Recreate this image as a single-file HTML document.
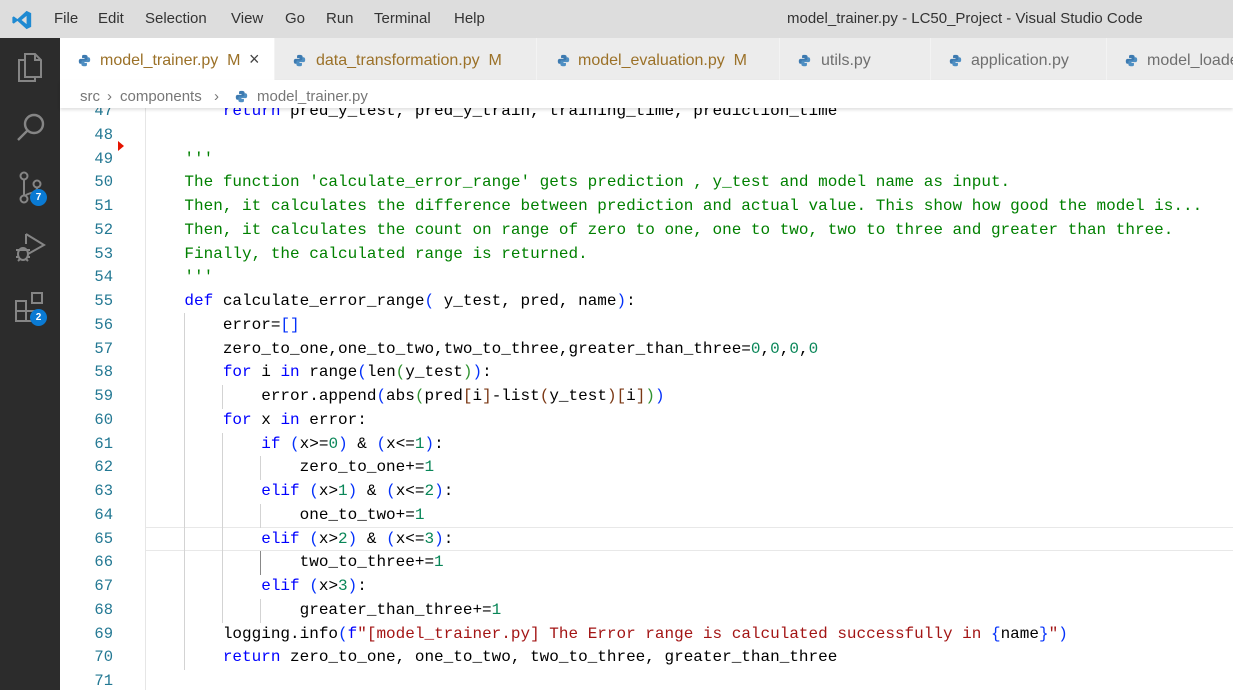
<!DOCTYPE html>
<html><head><meta charset="utf-8"><style>
*{margin:0;padding:0;box-sizing:border-box}
body{width:1233px;height:690px;overflow:hidden;background:#fff;font-family:"Liberation Sans",sans-serif;position:relative}
#title{position:absolute;left:0;top:0;width:1233px;height:38px;background:#dddddd;color:#333;font-size:15px}
#title span{position:absolute;top:10px}
#act{position:absolute;left:0;top:38px;width:60px;height:652px;background:#2c2c2c}
.badge{position:absolute;width:17px;height:17px;border-radius:50%;background:#0a7ad3;color:#fff;font-size:10px;font-weight:bold;text-align:center;line-height:17px}
#tabs{position:absolute;left:60px;top:38px;width:1173px;height:42px;background:#ececec}
.tab{position:absolute;top:0;height:42px;border-right:1px solid #f3f3f3;font-size:16px;color:#6f6f6f}
.tab .t{position:absolute;top:14px}
.tab.m .t{color:#9b7128}
.py{position:absolute;top:16px;width:13px;height:13px}
#bc{position:absolute;left:60px;top:80px;width:1173px;height:28px;background:#fff;box-shadow:0 2px 3px rgba(0,0,0,.12);z-index:5;font-size:15px;color:#777}
#bc span{position:absolute;top:8px}
#ed{position:absolute;left:60px;top:108px;width:1173px;height:582px;overflow:hidden}
.ln{position:absolute;left:0;width:53px;text-align:right;font-family:"Liberation Mono",monospace;font-size:15.5px;color:#237893;height:23.75px;line-height:23.75px}
.cl{position:absolute;left:86px;font-family:"Liberation Mono",monospace;font-size:16px;color:#000;white-space:pre;height:23.75px;line-height:23.75px}
.k{color:#0000ff}.c{color:#008000}.n{color:#098658}.s{color:#a31515}
.b1{color:#0431fa}.b2{color:#319331}.b3{color:#7b3814}
.g{position:absolute;width:1px;background:#d3d3d3}
</style></head><body>
<div id="title">
<svg style="position:absolute;left:11px;top:9px" width="22" height="22" viewBox="0 0 24 24"><path d="M17 2 L22 4.5 V19.5 L17 22 L7 13 L3 16 L1.5 15 V9 L3 8 L7 11 Z M17 7.5 L11.5 12 L17 16.5 Z" fill="#1f8ad2"/></svg>
<span style="left:54px">File</span><span style="left:98px">Edit</span><span style="left:145px">Selection</span><span style="left:231px">View</span><span style="left:285px">Go</span><span style="left:326px">Run</span><span style="left:374px">Terminal</span><span style="left:454px">Help</span>
<span style="left:787px">model_trainer.py - LC50_Project - Visual Studio Code</span>
</div>
<div id="act">
<svg style="position:absolute;left:16px;top:14px" width="28" height="34" viewBox="0 0 28 34" fill="none" stroke="#858585" stroke-width="2"><path d="M9 8 H3 V29 H19 V25"/><path d="M9 2 H19 L25 8 V25 H9 Z"/><path d="M19 2 V8 H25"/></svg>
<svg style="position:absolute;left:16px;top:74px" width="30" height="32" viewBox="0 0 30 32" fill="none" stroke="#858585" stroke-width="2.4"><circle cx="18" cy="12" r="9"/><path d="M11.5 18.5 L2 28"/></svg>
<svg style="position:absolute;left:16px;top:132px" width="28" height="36" viewBox="0 0 28 36" fill="none" stroke="#858585" stroke-width="2"><circle cx="8" cy="6" r="3.5"/><circle cx="8" cy="29" r="3.5"/><circle cx="21" cy="14" r="3.5"/><path d="M8 10 V25 M21 18 C21 24 12 22 9 26"/></svg>
<div class="badge" style="left:30px;top:151px">7</div>
<svg style="position:absolute;left:14px;top:192px" width="32" height="36" viewBox="0 0 32 36" fill="none" stroke="#858585" stroke-width="2"><path d="M12 4 L30 15 L14 24"/><path d="M12 4 V14"/><ellipse cx="9" cy="24" rx="5" ry="6"/><path d="M2 20 H16 M2 27 H5 M13 27 H16 M4 31 L6 29 M14 31 L12 29"/></svg>
<svg style="position:absolute;left:14px;top:253px" width="32" height="32" viewBox="0 0 32 32" fill="none" stroke="#858585" stroke-width="2"><path d="M2 10 H12 V30 H2 Z M2 20 H22 V30 H12"/><rect x="18" y="2" width="10" height="10"/></svg>
<div class="badge" style="left:30px;top:271px">2</div>
</div>
<div id="tabs">
<div class="tab m" style="left:0;width:215px;background:#fff"><svg class="py" style="left:18px" viewBox="0 0 16 16"><path d="M8 1C5 1 5 2 5 3v2h3v1H3C1.5 6 1 7.5 1 9s.6 3 2 3h1.5v-2c0-1.2 1-2 2-2h3.5c1 0 1.8-.8 1.8-1.8V3c0-1-1-2-3.8-2z" fill="#3d7ab0"/><path d="M8 15c3 0 3-1 3-2v-2H8v-1h5c1.5 0 2-1.5 2-3s-.6-3-2-3h-1.5v2c0 1.2-1 2-2 2H6c-1 0-1.8.8-1.8 1.8V13c0 1 1 2 3.8 2z" fill="#4f8fc3"/></svg><span class="t" style="left:40px">model_trainer.py&nbsp; M</span><span class="t" style="left:189px;color:#444;font-size:18px;top:11px">×</span></div>
<div class="tab m" style="left:215px;width:262px"><svg class="py" style="left:18px" viewBox="0 0 16 16"><path d="M8 1C5 1 5 2 5 3v2h3v1H3C1.5 6 1 7.5 1 9s.6 3 2 3h1.5v-2c0-1.2 1-2 2-2h3.5c1 0 1.8-.8 1.8-1.8V3c0-1-1-2-3.8-2z" fill="#3d7ab0"/><path d="M8 15c3 0 3-1 3-2v-2H8v-1h5c1.5 0 2-1.5 2-3s-.6-3-2-3h-1.5v2c0 1.2-1 2-2 2H6c-1 0-1.8.8-1.8 1.8V13c0 1 1 2 3.8 2z" fill="#4f8fc3"/></svg><span class="t" style="left:41px">data_transformation.py&nbsp; M</span></div>
<div class="tab m" style="left:477px;width:243px"><svg class="py" style="left:20px" viewBox="0 0 16 16"><path d="M8 1C5 1 5 2 5 3v2h3v1H3C1.5 6 1 7.5 1 9s.6 3 2 3h1.5v-2c0-1.2 1-2 2-2h3.5c1 0 1.8-.8 1.8-1.8V3c0-1-1-2-3.8-2z" fill="#3d7ab0"/><path d="M8 15c3 0 3-1 3-2v-2H8v-1h5c1.5 0 2-1.5 2-3s-.6-3-2-3h-1.5v2c0 1.2-1 2-2 2H6c-1 0-1.8.8-1.8 1.8V13c0 1 1 2 3.8 2z" fill="#4f8fc3"/></svg><span class="t" style="left:41px">model_evaluation.py&nbsp; M</span></div>
<div class="tab" style="left:720px;width:151px"><svg class="py" style="left:18px" viewBox="0 0 16 16"><path d="M8 1C5 1 5 2 5 3v2h3v1H3C1.5 6 1 7.5 1 9s.6 3 2 3h1.5v-2c0-1.2 1-2 2-2h3.5c1 0 1.8-.8 1.8-1.8V3c0-1-1-2-3.8-2z" fill="#3d7ab0"/><path d="M8 15c3 0 3-1 3-2v-2H8v-1h5c1.5 0 2-1.5 2-3s-.6-3-2-3h-1.5v2c0 1.2-1 2-2 2H6c-1 0-1.8.8-1.8 1.8V13c0 1 1 2 3.8 2z" fill="#4f8fc3"/></svg><span class="t" style="left:41px">utils.py</span></div>
<div class="tab" style="left:871px;width:176px"><svg class="py" style="left:18px" viewBox="0 0 16 16"><path d="M8 1C5 1 5 2 5 3v2h3v1H3C1.5 6 1 7.5 1 9s.6 3 2 3h1.5v-2c0-1.2 1-2 2-2h3.5c1 0 1.8-.8 1.8-1.8V3c0-1-1-2-3.8-2z" fill="#3d7ab0"/><path d="M8 15c3 0 3-1 3-2v-2H8v-1h5c1.5 0 2-1.5 2-3s-.6-3-2-3h-1.5v2c0 1.2-1 2-2 2H6c-1 0-1.8.8-1.8 1.8V13c0 1 1 2 3.8 2z" fill="#4f8fc3"/></svg><span class="t" style="left:40px">application.py</span></div>
<div class="tab" style="left:1047px;width:200px"><svg class="py" style="left:18px" viewBox="0 0 16 16"><path d="M8 1C5 1 5 2 5 3v2h3v1H3C1.5 6 1 7.5 1 9s.6 3 2 3h1.5v-2c0-1.2 1-2 2-2h3.5c1 0 1.8-.8 1.8-1.8V3c0-1-1-2-3.8-2z" fill="#3d7ab0"/><path d="M8 15c3 0 3-1 3-2v-2H8v-1h5c1.5 0 2-1.5 2-3s-.6-3-2-3h-1.5v2c0 1.2-1 2-2 2H6c-1 0-1.8.8-1.8 1.8V13c0 1 1 2 3.8 2z" fill="#4f8fc3"/></svg><span class="t" style="left:40px">model_loader.py</span></div>
</div>
<div id="bc"><span style="left:20px">src</span><span style="left:47px">›</span><span style="left:60px">components</span><span style="left:154px">›</span><svg style="position:absolute;left:175px;top:10px" width="13" height="13" viewBox="0 0 16 16"><path d="M8 1C5 1 5 2 5 3v2h3v1H3C1.5 6 1 7.5 1 9s.6 3 2 3h1.5v-2c0-1.2 1-2 2-2h3.5c1 0 1.8-.8 1.8-1.8V3c0-1-1-2-3.8-2z" fill="#3d7ab0"/><path d="M8 15c3 0 3-1 3-2v-2H8v-1h5c1.5 0 2-1.5 2-3s-.6-3-2-3h-1.5v2c0 1.2-1 2-2 2H6c-1 0-1.8.8-1.8 1.8V13c0 1 1 2 3.8 2z" fill="#4f8fc3"/></svg><span style="left:197px">model_trainer.py</span></div>
<div id="ed">
<div style="position:absolute;left:85px;top:0;width:1px;height:582px;background:#e6e6e6"></div>
<div style="position:absolute;left:86px;top:419px;width:1087px;height:24px;border-top:1px solid #e8e8e8;border-bottom:1px solid #e8e8e8"></div>
<div style="position:absolute;left:58px;top:33px;width:0;height:0;border-top:5px solid transparent;border-bottom:5px solid transparent;border-left:6px solid #e51400"></div>
<div class="g" style="left:124px;top:205px;height:357px"></div>
<div class="g" style="left:162px;top:277px;height:24px"></div>
<div class="g" style="left:162px;top:325px;height:190px"></div>
<div class="g" style="left:200px;top:348px;height:24px"></div>
<div class="g" style="left:200px;top:396px;height:24px"></div>
<div class="g" style="left:200px;top:443px;height:24px;background:#888"></div>
<div class="g" style="left:200px;top:491px;height:24px"></div>
<div id="lines"></div>
</div>
<script>
var L=[
[47,'        <span class="k">return</span> pred_y_test, pred_y_train, training_time, prediction_time'],
[48,''],
[49,'    <span class="c">\'\'\'</span>'],
[50,'    <span class="c">The function \'calculate_error_range\' gets prediction , y_test and model name as input.</span>'],
[51,'    <span class="c">Then, it calculates the difference between prediction and actual value. This show how good the model is...</span>'],
[52,'    <span class="c">Then, it calculates the count on range of zero to one, one to two, two to three and greater than three.</span>'],
[53,'    <span class="c">Finally, the calculated range is returned.</span>'],
[54,'    <span class="c">\'\'\'</span>'],
[55,'    <span class="k">def</span> calculate_error_range<span class="b1">(</span> y_test, pred, name<span class="b1">)</span>:'],
[56,'        error=<span class="b1">[]</span>'],
[57,'        zero_to_one,one_to_two,two_to_three,greater_than_three=<span class="n">0</span>,<span class="n">0</span>,<span class="n">0</span>,<span class="n">0</span>'],
[58,'        <span class="k">for</span> i <span class="k">in</span> range<span class="b1">(</span>len<span class="b2">(</span>y_test<span class="b2">)</span><span class="b1">)</span>:'],
[59,'            error.append<span class="b1">(</span>abs<span class="b2">(</span>pred<span class="b3">[</span>i<span class="b3">]</span>-list<span class="b3">(</span>y_test<span class="b3">)</span><span class="b3">[</span>i<span class="b3">]</span><span class="b2">)</span><span class="b1">)</span>'],
[60,'        <span class="k">for</span> x <span class="k">in</span> error:'],
[61,'            <span class="k">if</span> <span class="b1">(</span>x>=<span class="n">0</span><span class="b1">)</span> &amp; <span class="b1">(</span>x&lt;=<span class="n">1</span><span class="b1">)</span>:'],
[62,'                zero_to_one+=<span class="n">1</span>'],
[63,'            <span class="k">elif</span> <span class="b1">(</span>x><span class="n">1</span><span class="b1">)</span> &amp; <span class="b1">(</span>x&lt;=<span class="n">2</span><span class="b1">)</span>:'],
[64,'                one_to_two+=<span class="n">1</span>'],
[65,'            <span class="k">elif</span> <span class="b1">(</span>x><span class="n">2</span><span class="b1">)</span> &amp; <span class="b1">(</span>x&lt;=<span class="n">3</span><span class="b1">)</span>:'],
[66,'                two_to_three+=<span class="n">1</span>'],
[67,'            <span class="k">elif</span> <span class="b1">(</span>x><span class="n">3</span><span class="b1">)</span>:'],
[68,'                greater_than_three+=<span class="n">1</span>'],
[69,'        logging.info<span class="b1">(</span><span class="k">f</span><span class="s">"[model_trainer.py] The Error range is calculated successfully in </span><span class="b1">{</span>name<span class="b1">}</span><span class="s">"</span><span class="b1">)</span>'],
[70,'        <span class="k">return</span> zero_to_one, one_to_two, two_to_three, greater_than_three'],
[71,'']];
var h='';
L.forEach(function(l){var t=-8+(l[0]-47)*23.75;
h+='<div class="ln" style="top:'+t+'px">'+l[0]+'</div><div class="cl" style="top:'+t+'px">'+l[1]+'</div>';});
document.getElementById('lines').innerHTML=h;
</script>
</body></html>
